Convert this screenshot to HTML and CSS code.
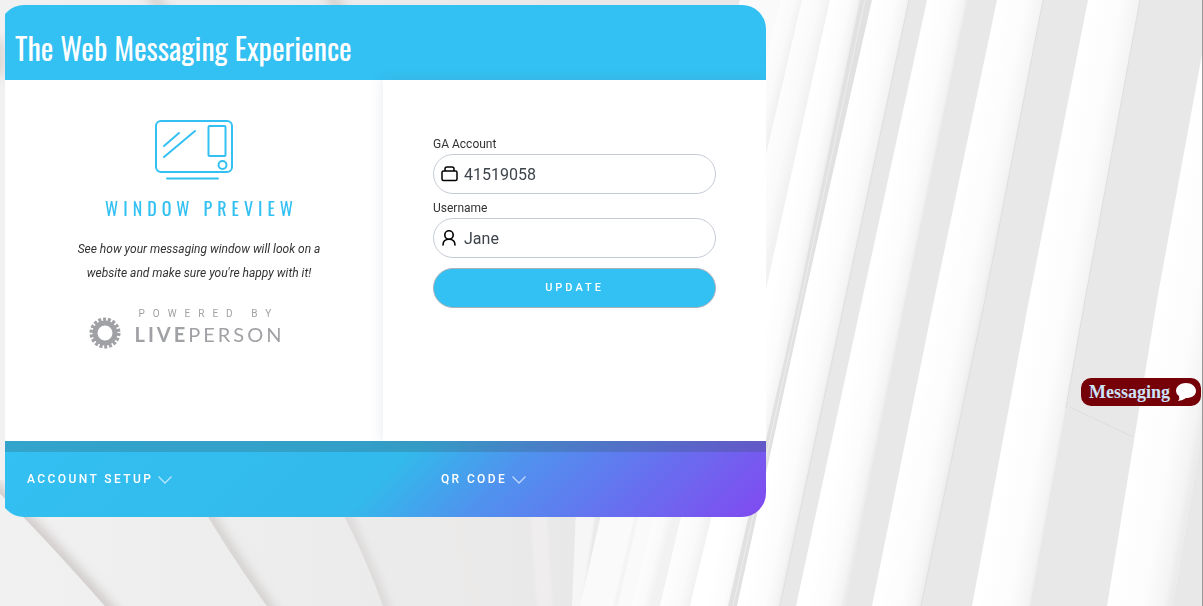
FILE: index.html
```html
<!DOCTYPE html>
<html lang="en">
<head>
<meta charset="utf-8">
<title>The Web Messaging Experience</title>
<link rel="stylesheet" href="styles.css">
</head>
<body>
<svg class="backdrop" viewBox="0 0 1203 606" preserveAspectRatio="xMidYMid slice" aria-hidden="true">
  <defs>
    <linearGradient id="rib"><stop offset="0" stop-color="#fff"/><stop offset=".6" stop-color="#fcfcfc"/><stop offset=".9" stop-color="#f4f4f4"/><stop offset="1" stop-color="#ececec"/></linearGradient>
    <linearGradient id="pale"><stop offset="0" stop-color="#fdfdfd"/><stop offset=".6" stop-color="#fafafa"/><stop offset="1" stop-color="#f2f2f2"/></linearGradient>
    <linearGradient id="r1" href="#pale" gradientUnits="userSpaceOnUse" x1="781" y1="0" x2="801" y2="5"/>
    <linearGradient id="r2" href="#pale" gradientUnits="userSpaceOnUse" x1="802" y1="0" x2="828" y2="6"/>
    <linearGradient id="r3" href="#rib" gradientUnits="userSpaceOnUse" x1="830" y1="0" x2="859" y2="6"/>
    <linearGradient id="r4" href="#rib" gradientUnits="userSpaceOnUse" x1="872" y1="0" x2="909" y2="8"/>
    <linearGradient id="r5" href="#rib" gradientUnits="userSpaceOnUse" x1="927" y1="0" x2="966" y2="8"/>
    <linearGradient id="r6" href="#rib" gradientUnits="userSpaceOnUse" x1="997" y1="0" x2="1045" y2="10"/>
    <linearGradient id="r7" href="#rib" gradientUnits="userSpaceOnUse" x1="1088" y1="0" x2="1142" y2="10"/>
    <linearGradient id="r8" href="#rib" gradientUnits="userSpaceOnUse" x1="1208" y1="0" x2="1272" y2="11"/>
    <linearGradient id="fold" gradientUnits="userSpaceOnUse" x1="0" y1="0" x2="600" y2="0"><stop offset="0" stop-color="#f1f1f1"/><stop offset="1" stop-color="#e8e8e8"/></linearGradient>
    <filter id="soft" x="-20%" y="-20%" width="140%" height="140%"><feGaussianBlur stdDeviation="6"/></filter>
    <filter id="edge" x="-20%" y="-20%" width="140%" height="140%"><feGaussianBlur stdDeviation="1"/></filter>
    <clipPath id="f1"><path d="M-4 490Q40 532 110 612H300V480H-4Z"/></clipPath>
    <clipPath id="f2"><path d="M205 512Q234 560 271 612H400V500H205Z"/></clipPath>
    <clipPath id="f3"><path d="M342 512Q367 560 385 612H500V500H342Z"/></clipPath>
  </defs>
  <path fill="#e8e8e8" d="M0 0H1203V606H0Z"/>
  <path fill="url(#fold)" d="M0 0H610L575 606H0Z"/>
  <g fill="none" stroke="#c9c4c2">
    <g clip-path="url(#f1)"><path stroke-width="12" filter="url(#soft)" d="M-14 480Q40 532 120 624"/></g>
    <g clip-path="url(#f2)"><path stroke-width="9" filter="url(#soft)" d="M195 495Q234 560 280 626"/></g>
    <g clip-path="url(#f3)"><path stroke-width="6" filter="url(#soft)" d="M335 495Q367 560 390 626"/></g>
    <path stroke-width="8" filter="url(#soft)" d="M148 -10L170 20M328 -10L345 20M-2 40V76"/>
  </g>
  <path fill="none" stroke="#eceae8" stroke-width="7" filter="url(#edge)" d="M452 510Q468 560 476 612"/>
  <path fill="#efeded" filter="url(#edge)" d="M530 510H547L553 612H537Z"/>
  <path fill="#f6f6f6" d="M576 510H600L584 606H572Z"/>
  <path fill="none" stroke="#e8e8e8" stroke-width="4" filter="url(#edge)" d="M598 510L584 606"/>
  <path fill="#fafafa" d="M602 510L740 0H860L735 606H580Z"/>
  <path fill="none" stroke="#f2f2f2" stroke-width="3" filter="url(#edge)" d="M638 510L614 612"/>
  <path fill="url(#r1)" d="M781 0H802L735 290L660 606H632Z"/>
  <path fill="url(#r2)" d="M802 0H830L766 290L690 606H660L735 290Z"/>
  <path fill="url(#r3)" d="M830 0H862L798 300L730 606H690L766 290Z"/>
  <path fill="#e1e1e1" d="M860 0H872L804 300L737 606H728L798 300Z"/>
  <path fill="none" stroke="#ededed" d="M865 0L801 300L733 606"/>
  <path fill="url(#r4)" d="M872 0H909L845 300L780 606H737L804 300Z"/>
  <path fill="url(#r5)" d="M927 0H967L905 300L845 606H796L862 300Z"/>
  <path fill="url(#r6)" d="M997 0H1043L985 300L921 606H872L934 300Z"/>
  <path fill="url(#r7)" d="M1088 0H1140L1085 300L1030 606H972L1029 300Z"/>
  <path fill="url(#r8)" d="M1212 0H1276L1173 606H1107L1157 300Z"/>
  <g fill="none" stroke="#dedede">
    <path d="M909 0L845 300L780 606M1043 0L985 300L921 606M1140 0L1085 300L1066 408M1070 407L1133 437"/>
  </g>
</svg>
<main class="card">
  <header class="card-header"><h1 class="title">The Web Messaging Experience</h1></header>
  <div class="panels">
    <section class="panel preview">
      <svg class="preview-icon" width="80" height="62" viewBox="0 0 80 62" fill="none" stroke="#33c0f2" stroke-width="2" stroke-linecap="round" aria-hidden="true">
        <rect x="2" y="2" width="76" height="51" rx="5"/><rect x="54.500" y="7" width="17" height="30" rx="1"/><circle cx="68.500" cy="46" r="4"/>
        <path d="M10 27L25 14M10 38L41 12M13 59.500H64"/>
      </svg>
      <h2 class="preview-title">WINDOW PREVIEW</h2>
      <p class="preview-text">See how your messaging window will look on a website and make sure you're happy with it!</p>
      <div class="brand">
        <svg class="gear" width="32" height="32" viewBox="-16 -16 32 32" fill="none" stroke="#a0a1a4" aria-hidden="true">
          <circle r="10" stroke-width="5"/><circle r="13.500" stroke-width="4" stroke-dasharray="3 1.712"/>
        </svg>
        <div class="brand-words">
          <span class="powered">POWERED BY</span>
          <span class="wordmark"><b>LIVE</b>PERSON</span>
        </div>
      </div>
    </section>
    <form class="panel form">
      <label class="label" for="account">GA Account</label>
      <div class="field">
        <svg width="18" height="16" viewBox="0 0 18 16" fill="none" stroke="#000" stroke-width="1.500" aria-hidden="true"><rect x="1" y="5" width="15" height="9.500" rx="1.500"/><path d="M4 5V3Q4 1 6 1H11Q13 1 13 3V5"/></svg>
        <input class="input" id="account" type="text" value="41519058">
      </div>
      <label class="label" for="username">Username</label>
      <div class="field">
        <svg width="18" height="16" viewBox="0 0 18 16" fill="none" stroke="#000" stroke-width="1.600" stroke-linecap="round" aria-hidden="true"><circle cx="8" cy="5" r="4.200"/><path d="M2 15Q2 9.200 8 9.200Q14 9.200 14 15"/></svg>
        <input class="input" id="username" type="text" value="Jane">
      </div>
      <button class="update" type="button">UPDATE</button>
    </form>
  </div>
  <footer class="card-footer">
    <button class="toggle" type="button">ACCOUNT SETUP <svg width="14" height="8" viewBox="0 0 14 8" fill="none" stroke="#fff" stroke-opacity=".65" stroke-width="1.300" aria-hidden="true"><path d="M.5 .5L7 7L13.500 .5"/></svg></button>
    <button class="toggle" type="button">QR CODE <svg width="14" height="8" viewBox="0 0 14 8" fill="none" stroke="#fff" stroke-opacity=".65" stroke-width="1.300" aria-hidden="true"><path d="M.5 .5L7 7L13.500 .5"/></svg></button>
  </footer>
</main>
<button class="chat" type="button">Messaging
  <svg width="20" height="19" viewBox="0 0 20 19" fill="#fff" aria-hidden="true"><path d="M10 0C15.500 0 20 3.500 20 8S15.500 15 10 15Q6 18 2 18Q4 16 3 13Q0 11 0 8C0 3.500 4.500 0 10 0Z"/></svg>
</button>
</body>
</html>
```

FILE: styles.css
```css
* { box-sizing: border-box; }
body {
  margin: 0;
  min-height: 100vh;
  padding: 5px 5px 5px 0;
  border-right: 1px solid #999;
  color: #333;
  font-family: Roboto, sans-serif;
}
h1, h2, p { margin: 0; }
button { border: 0; font-family: inherit; cursor: pointer; }
.backdrop {
  position: fixed;
  inset: 0;
  z-index: -1;
  width: 100%;
  height: 100%;
}
.card {
  width: 64%;
  overflow: hidden;
  border-radius: 24px;
  clip-path: inset(0 0 0 5px);
}
.card-header {
  padding: 19px 15px 8px;
  background: #33c0f2;
  color: #fff;
}
.title {
  font: 400 30px/48px Oswald, "Liberation Sans Narrow", sans-serif;
  white-space: nowrap;
}
.panels {
  display: grid;
  grid-template-columns: 1fr 1fr;
  background: #fff;
}
.panel { padding: 39px 50px 92px; }
.preview {
  display: flex;
  flex-direction: column;
  align-items: center;
  padding-right: 35px;
  text-align: center;
}
.preview-icon { margin-right: 10px; }
.preview-title {
  margin-top: 14px;
  padding-left: 5px;
  color: #33c0f2;
  font: 400 18px/26px Oswald, "Liberation Sans Narrow", sans-serif;
  letter-spacing: 5px;
  white-space: nowrap;
}
.preview-text {
  max-width: 270px;
  margin-top: 16px;
  font-size: 12px;
  font-style: italic;
  line-height: 24px;
}
.brand {
  display: flex;
  align-items: flex-end;
  gap: 14px;
  margin-top: 24px;
  margin-right: 25px;
  color: #a0a1a4;
}
.brand-words { display: grid; text-align: left; }
.powered { padding-left: 4px; font-size: 10px; line-height: 10px; letter-spacing: 8px; }
.wordmark { font: 400 20px/30px Lato, sans-serif; letter-spacing: 3px; }
.form {
  display: flex;
  flex-direction: column;
  padding-top: 54px;
  box-shadow: 0 0 12px rgba(80, 110, 150, .16);
}
.label { font-size: 12px; line-height: 20px; }
.field {
  display: flex;
  align-items: center;
  gap: 5px;
  height: 40px;
  margin-bottom: 4px;
  padding: 0 7px;
  border: 1px solid #c4cad4;
  border-radius: 20px;
}
.input {
  flex: 1;
  min-width: 0;
  padding: 1px 0 0;
  border: 0;
  outline: 0;
  background: transparent;
  color: #3e444b;
  font: 16px/24px Roboto, sans-serif;
}
.update {
  height: 40px;
  margin-top: 6px;
  padding: 0 0 2px;
  border: 1px solid #aab2b8;
  border-radius: 20px;
  background: #33c0f2;
  color: #fff;
  font-size: 11px;
  font-weight: 500;
  letter-spacing: 3px;
}
.card-footer {
  display: grid;
  grid-template-columns: 56% 1fr;
  padding: 21px 0 31px 27px;
  border-top: 11px solid rgba(50, 80, 90, .25);
  background: linear-gradient(135deg, #33c0f2, #33b9eb 50%, #4f93ee 64%, #8149f0) border-box;
}
.toggle {
  display: flex;
  align-items: center;
  gap: 5px;
  padding: 0;
  background: none;
  color: #fff;
  font-size: 12px;
  font-weight: 500;
  line-height: 13px;
  letter-spacing: 0.2em;
}
.chat {
  position: fixed;
  top: 378px;
  right: 2px;
  display: flex;
  align-items: center;
  gap: 6px;
  height: 28px;
  padding: 0 5px 0 8px;
  border-radius: 10px;
  background: #750007;
  color: #cde3fa;
  font: 700 18px/28px "Liberation Serif", serif;
}
```
